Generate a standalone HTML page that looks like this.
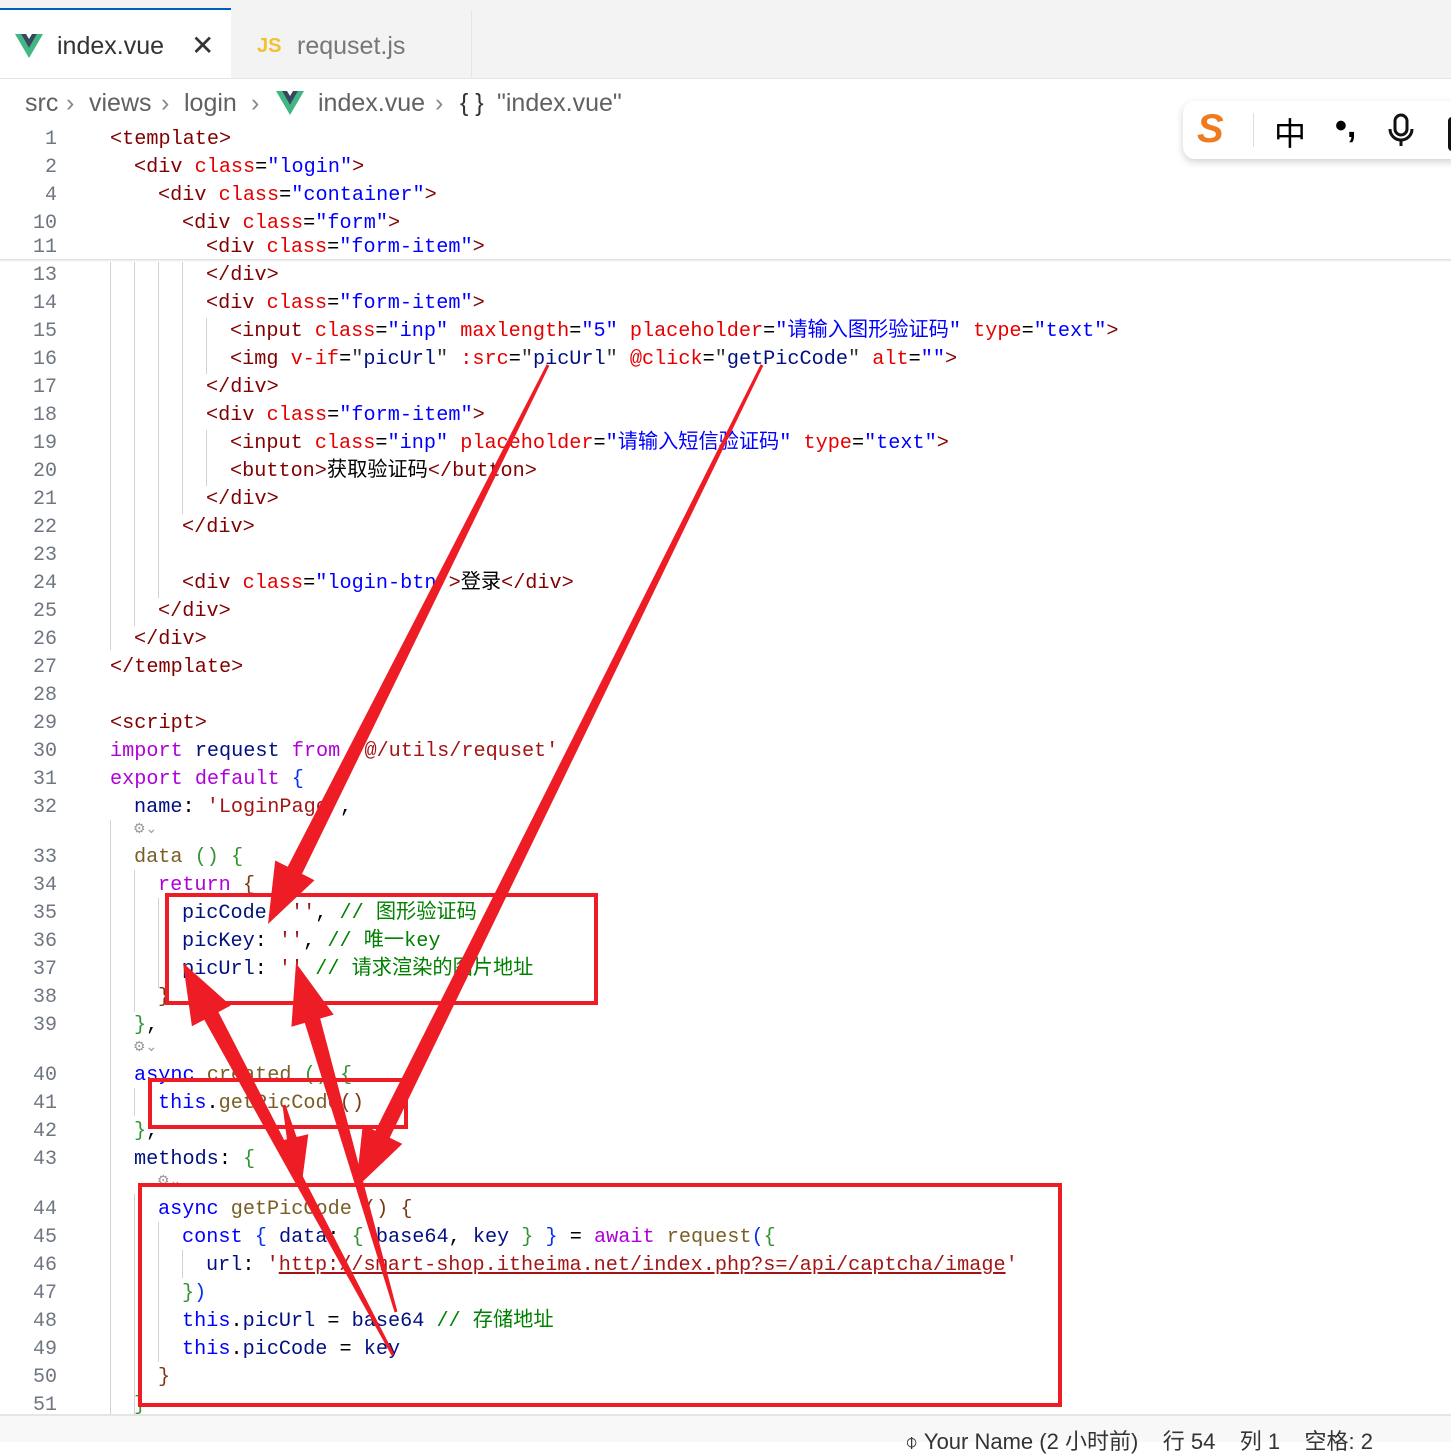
<!DOCTYPE html>
<html><head><meta charset="utf-8"><style>
body{margin:0;width:1451px;height:1440px;position:relative;overflow:hidden;background:#fff;font-family:"Liberation Sans","Noto Sans CJK SC",sans-serif}
.top{position:absolute;left:0;top:0;width:1451px;height:78px;background:#f3f3f3;border-bottom:1px solid #e5e5e5}
.tab{position:absolute;top:10px;height:68px;font-size:25px;line-height:72px}
.bc{position:absolute;top:89px;font-size:25px;color:#616161;white-space:pre}
.ln{position:absolute;left:0;width:57px;text-align:right;font-family:"Liberation Mono",monospace;font-size:20px;color:#6e7681;height:28px;line-height:28px}
.c{position:absolute;left:110px;font-family:"Liberation Mono","Noto Sans CJK SC",monospace;font-size:20.2px;white-space:pre;height:28px;line-height:28px;color:#000}
.t{color:#800000}.a{color:#e50000}.s{color:#0000ff}.k{color:#0000ff}.p{color:#af00db}.f{color:#795e26}.v{color:#001080}.cm{color:#008000}.st{color:#a31515}.b1{color:#0431fa}.b2{color:#319331}.b3{color:#7b3814}.g{color:#333}
.guide{position:absolute;width:1px;background:#d3d3d3}
.lens{position:absolute;font-size:14px;color:#999}
</style></head><body>
<div class="top"></div>
<div class="tab" style="left:0;width:231px;background:#fff;border-top:2px solid #005fb8;top:8px">
<svg style="position:absolute;left:15px;top:24px" width="28" height="24" viewBox="0 0 28 24"><path d="M0 0h6l8 14 8-14h6L14 24z" fill="#41b883"/><path d="M6 0h5l3 5 3-5h5L14 14z" fill="#35495e"/></svg>
<span style="position:absolute;left:57px;color:#333">index.vue</span>
<span style="position:absolute;left:191px;font-size:28px;color:#333">✕</span></div>
<div class="tab" style="left:233px;width:238px;border-right:1px solid #e5e5e5">
<span style="position:absolute;left:24px;color:#f1c232;font-weight:bold;font-size:20px">JS</span>
<span style="position:absolute;left:64px;color:#777">requset.js</span></div>
<span class="bc" style="left:25px">src</span><span class="bc" style="left:66px;color:#888">›</span>
<span class="bc" style="left:89px">views</span><span class="bc" style="left:161px;color:#888">›</span>
<span class="bc" style="left:184px">login</span><span class="bc" style="left:251px;color:#888">›</span>
<span class="bc" style="left:318px">index.vue</span><span class="bc" style="left:435px;color:#888">›</span>
<span class="bc" style="left:460px;color:#333">{ }</span><span class="bc" style="left:497px">"index.vue"</span>
<svg style="position:absolute;left:276px;top:91px" width="28" height="24" viewBox="0 0 28 24"><path d="M0 0h6l8 14 8-14h6L14 24z" fill="#41b883"/><path d="M6 0h5l3 5 3-5h5L14 14z" fill="#35495e"/></svg>

<div style="position:absolute;left:1183px;top:101px;width:290px;height:58px;background:#fff;border-radius:12px;box-shadow:0 3px 8px rgba(0,0,0,.18)">
<span style="position:absolute;left:14px;top:6px;font-size:40px;font-style:italic;font-weight:bold;color:#f07a1e">S</span>
<div style="position:absolute;left:70px;top:12px;width:1px;height:34px;background:#ddd"></div>
<span style="position:absolute;left:91px;top:8px;font-size:32px;font-family:'Noto Sans CJK SC',sans-serif">中</span>
<span style="position:absolute;left:152px;top:6px;font-size:34px;font-weight:bold">•,</span>
<svg style="position:absolute;left:202px;top:12px" width="32" height="36" viewBox="0 0 32 36"><rect x="10" y="2" width="12" height="20" rx="6" fill="none" stroke="#111" stroke-width="3"/><path d="M5 16a11 11 0 0 0 22 0M16 27v6" fill="none" stroke="#111" stroke-width="3"/></svg>
<div style="position:absolute;left:265px;top:16px;width:10px;height:28px;border:3px solid #111;border-radius:4px"></div>
</div>

<div style="position:absolute;left:0;top:259px;width:1451px;height:3px;background:linear-gradient(#ddd,#fff)"></div>
<div style="position:absolute;left:0;top:1414px;width:1451px;height:26px;background:#f8f8f8;border-top:2px solid #e5e5e5"></div>
<div style="position:absolute;left:905px;top:1424px;font-size:22px;color:#333;white-space:pre">⌽ Your Name (2 小时前)    行 54    列 1    空格: 2</div>

<div id="code"></div>
<svg id="arr" style="position:absolute;left:0;top:0" width="1451" height="1440"></svg>
<script>
var L=[
[1,138,0,'<span class=t>&lt;template&gt;</span>'],
[2,166,1,'<span class=t>&lt;div</span> <span class=a>class</span>=<span class=s>"login"</span><span class=t>&gt;</span>'],
[4,194,2,'<span class=t>&lt;div</span> <span class=a>class</span>=<span class=s>"container"</span><span class=t>&gt;</span>'],
[10,222,3,'<span class=t>&lt;div</span> <span class=a>class</span>=<span class=s>"form"</span><span class=t>&gt;</span>'],
[11,246,4,'<span class=t>&lt;div</span> <span class=a>class</span>=<span class=s>"form-item"</span><span class=t>&gt;</span>'],
[13,274,4,'<span class=t>&lt;/div&gt;</span>'],
[14,302,4,'<span class=t>&lt;div</span> <span class=a>class</span>=<span class=s>"form-item"</span><span class=t>&gt;</span>'],
[15,330,5,'<span class=t>&lt;input</span> <span class=a>class</span>=<span class=s>"inp"</span> <span class=a>maxlength</span>=<span class=s>"5"</span> <span class=a>placeholder</span>=<span class=s>"请输入图形验证码"</span> <span class=a>type</span>=<span class=s>"text"</span><span class=t>&gt;</span>'],
[16,358,5,'<span class=t>&lt;img</span> <span class=a>v-if</span>=<span class=g>"</span><span class=v>picUrl</span><span class=g>"</span> <span class=a>:src</span>=<span class=g>"</span><span class=v>picUrl</span><span class=g>"</span> <span class=a>@click</span>=<span class=g>"</span><span class=v>getPicCode</span><span class=g>"</span> <span class=a>alt</span>=<span class=s>""</span><span class=t>&gt;</span>'],
[17,386,4,'<span class=t>&lt;/div&gt;</span>'],
[18,414,4,'<span class=t>&lt;div</span> <span class=a>class</span>=<span class=s>"form-item"</span><span class=t>&gt;</span>'],
[19,442,5,'<span class=t>&lt;input</span> <span class=a>class</span>=<span class=s>"inp"</span> <span class=a>placeholder</span>=<span class=s>"请输入短信验证码"</span> <span class=a>type</span>=<span class=s>"text"</span><span class=t>&gt;</span>'],
[20,470,5,'<span class=t>&lt;button&gt;</span>获取验证码<span class=t>&lt;/button&gt;</span>'],
[21,498,4,'<span class=t>&lt;/div&gt;</span>'],
[22,526,3,'<span class=t>&lt;/div&gt;</span>'],
[23,554,0,''],
[24,582,3,'<span class=t>&lt;div</span> <span class=a>class</span>=<span class=s>"login-btn"</span><span class=t>&gt;</span>登录<span class=t>&lt;/div&gt;</span>'],
[25,610,2,'<span class=t>&lt;/div&gt;</span>'],
[26,638,1,'<span class=t>&lt;/div&gt;</span>'],
[27,666,0,'<span class=t>&lt;/template&gt;</span>'],
[28,694,0,''],
[29,722,0,'<span class=t>&lt;script&gt;</span>'],
[30,750,0,'<span class=p>import</span> <span class=v>request</span> <span class=p>from</span> <span class=st>\'@/utils/requset\'</span>'],
[31,778,0,'<span class=p>export</span> <span class=p>default</span> <span class=b1>{</span>'],
[32,806,1,'<span class=v>name</span>: <span class=st>\'LoginPage\'</span>,'],
[33,856,1,'<span class=f>data</span> <span class=b2>()</span> <span class=b2>{</span>'],
[34,884,2,'<span class=p>return</span> <span class=b3>{</span>'],
[35,912,3,'<span class=v>picCode</span>: <span class=st>\'\'</span>, <span class=cm>// 图形验证码</span>'],
[36,940,3,'<span class=v>picKey</span>: <span class=st>\'\'</span>, <span class=cm>// 唯一key</span>'],
[37,968,3,'<span class=v>picUrl</span>: <span class=st>\'\'</span> <span class=cm>// 请求渲染的图片地址</span>'],
[38,996,2,'<span class=b3>}</span>'],
[39,1024,1,'<span class=b2>}</span>,'],
[40,1074,1,'<span class=k>async</span> <span class=f>created</span> <span class=b2>()</span> <span class=b2>{</span>'],
[41,1102,2,'<span class=k>this</span>.<span class=f>getPicCode</span><span class=b3>()</span>'],
[42,1130,1,'<span class=b2>}</span>,'],
[43,1158,1,'<span class=v>methods</span>: <span class=b2>{</span>'],
[44,1208,2,'<span class=k>async</span> <span class=f>getPicCode</span> <span class=b3>()</span> <span class=b3>{</span>'],
[45,1236,3,'<span class=k>const</span> <span class=b1>{</span> <span class=v>data</span>: <span class=b2>{</span> <span class=v>base64</span>, <span class=v>key</span> <span class=b2>}</span> <span class=b1>}</span> = <span class=p>await</span> <span class=f>request</span><span class=b1>(</span><span class=b2>{</span>'],
[46,1264,4,'<span class=v>url</span>: <span class=st>\'<u style="text-decoration-color:#a31515">http://smart-shop.itheima.net/index.php?s=/api/captcha/image</u>\'</span>'],
[47,1292,3,'<span class=b2>}</span><span class=b1>)</span>'],
[48,1320,3,'<span class=k>this</span>.<span class=v>picUrl</span> = <span class=v>base64</span> <span class=cm>// 存储地址</span>'],
[49,1348,3,'<span class=k>this</span>.<span class=v>picCode</span> = <span class=v>key</span>'],
[50,1376,2,'<span class=b3>}</span>'],
[51,1404,1,'<span class=b2>}</span>']];
var h='';
L.forEach(function(l){var t=l[1]-12;
h+='<div class=ln style="top:'+t+'px">'+l[0]+'</div><div class=c style="top:'+t+'px;left:'+(110+24*l[2])+'px">'+l[3]+'</div>';});
[[110,262,650],[134,262,626],[158,262,598],[182,262,514],[206,318,374],[206,430,486],[110,820,1414],[134,870,1012],[158,898,988],[134,1088,1116],[134,1194,1414],[158,1222,1362],[182,1250,1278]].forEach(function(g){h+='<div class=guide style="left:'+g[0]+'px;top:'+g[1]+'px;height:'+(g[2]-g[1])+'px"></div>'});
[[133,820],[133,1038],[157,1172]].forEach(function(p){h+='<div class=lens style="left:'+p[0]+'px;top:'+p[1]+'px">⚙⌄</div>'});
document.getElementById('code').innerHTML=h;
var s='';
function rect(x,y,w,hh){s+='<rect x="'+x+'" y="'+y+'" width="'+w+'" height="'+hh+'" fill="none" stroke="#ee1c25" stroke-width="4"/>';}
rect(167,895,429,108);rect(150,1080,256,47);rect(140,1185,920,220);
function arrow(x1,y1,x2,y2,w0,w1,hl,hw){var dx=x2-x1,dy=y2-y1,len=Math.sqrt(dx*dx+dy*dy),ux=dx/len,uy=dy/len,nx=-uy,ny=ux;
var bx=x2-ux*hl,by=y2-uy*hl;
var pts=[[x1+nx*w0/2,y1+ny*w0/2],[bx+nx*w1/2,by+ny*w1/2],[bx+nx*hw/2,by+ny*hw/2],[x2,y2],[bx-nx*hw/2,by-ny*hw/2],[bx-nx*w1/2,by-ny*w1/2],[x1-nx*w0/2,y1-ny*w0/2]];
s+='<polygon fill="#ee1c25" points="'+pts.map(function(p){return p[0].toFixed(1)+','+p[1].toFixed(1)}).join(' ')+'"/>';}
arrow(548,365,268,924,3,16,60,44);
arrow(762,365,356,1188,3,16,60,44);
arrow(393,1355,183,963,3,16,60,44);
arrow(396,1312,296,963,3,16,60,44);
arrow(284,1105,302,1182,3,10,45,34);
document.getElementById('arr').innerHTML=s;
</script>
</body></html>
